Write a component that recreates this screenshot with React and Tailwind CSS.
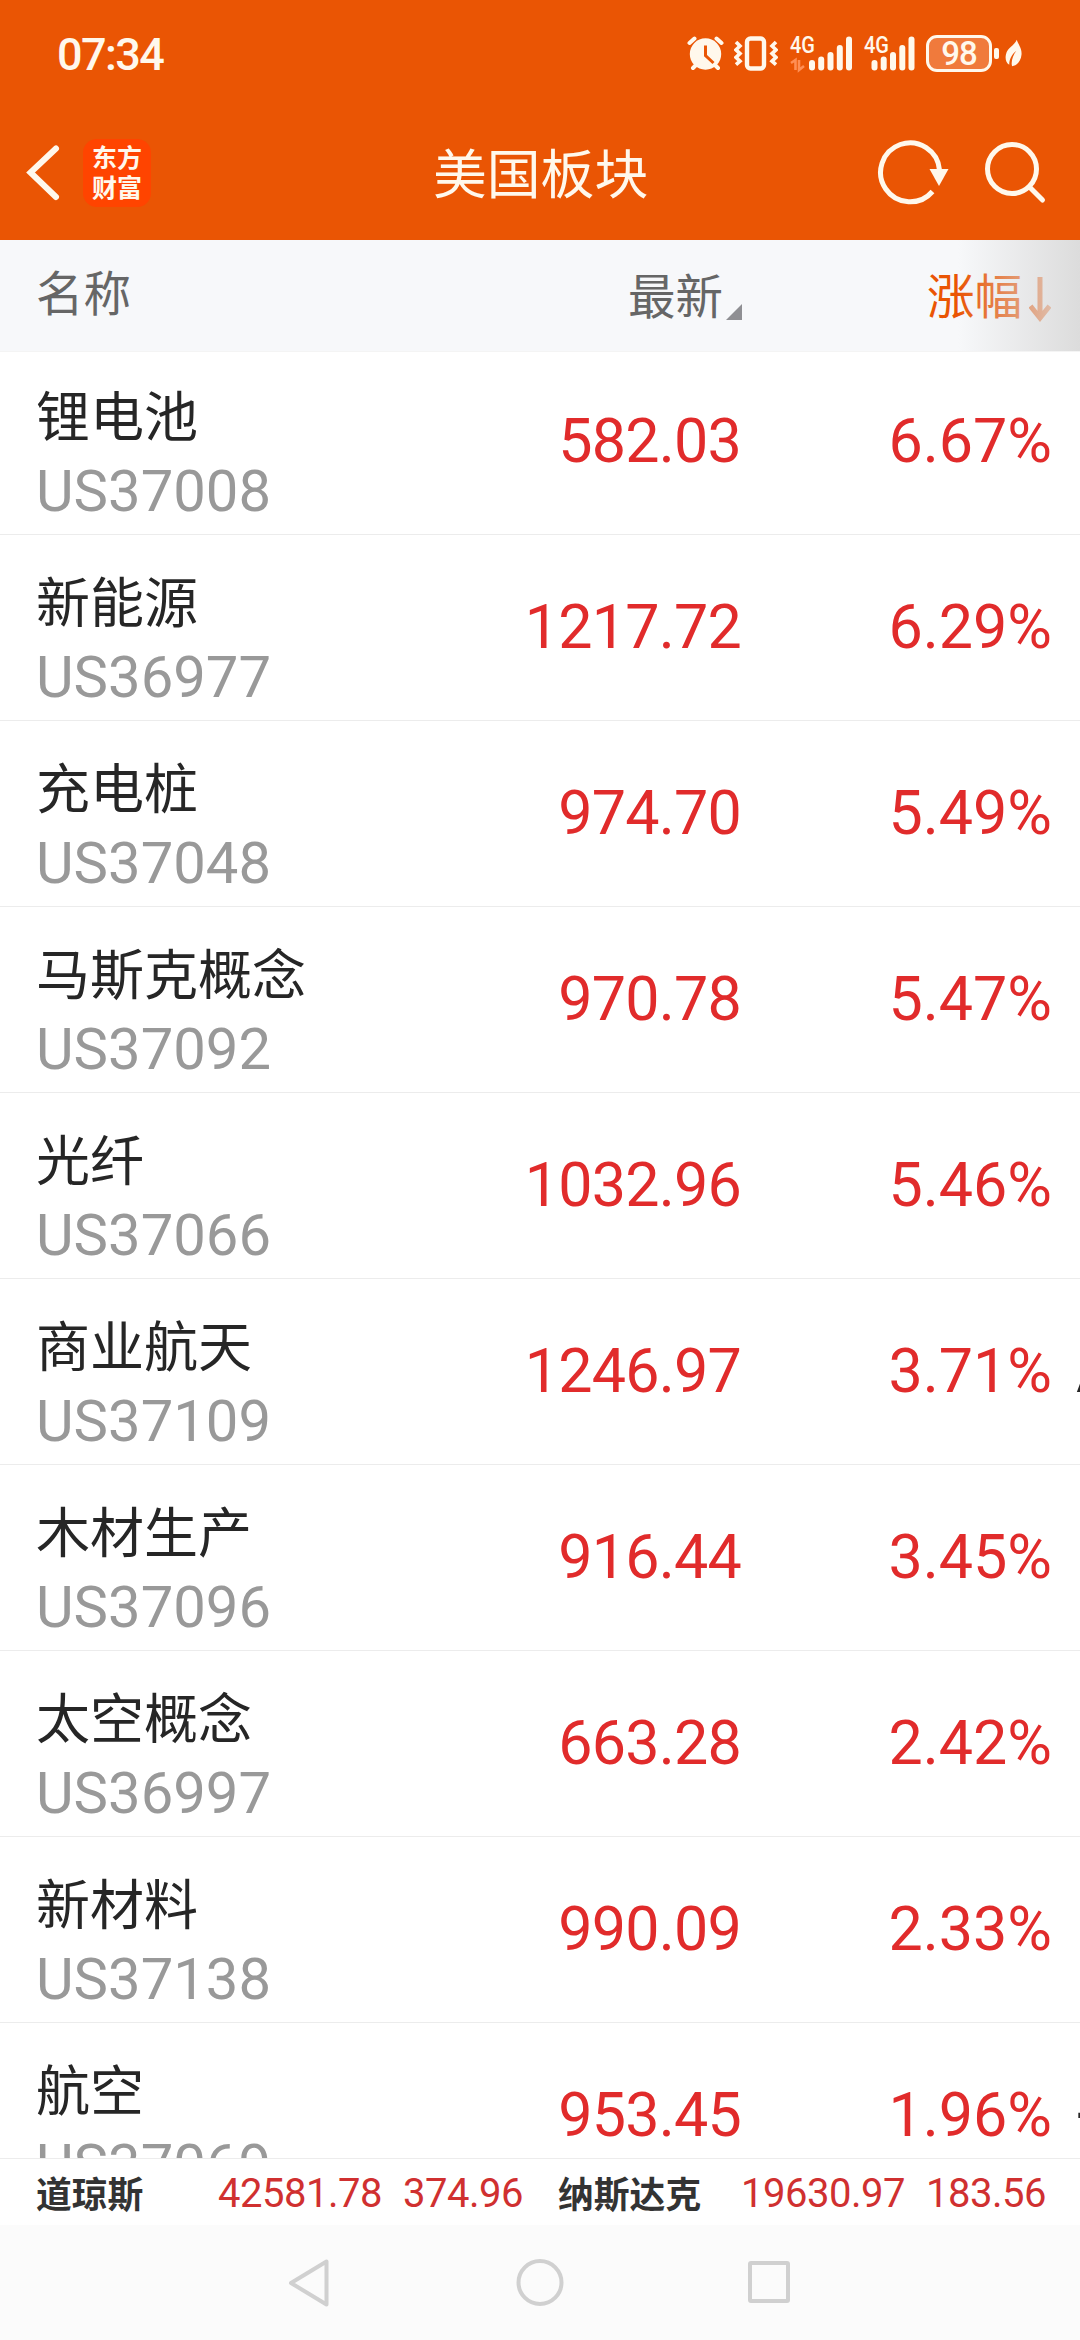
import React from 'react';

const SECTORS = [
    { name: '锂电池', code: 'US37008', price: '582.03', change: '6.67%' },
    { name: '新能源', code: 'US36977', price: '1217.72', change: '6.29%' },
    { name: '充电桩', code: 'US37048', price: '974.70', change: '5.49%' },
    { name: '马斯克概念', code: 'US37092', price: '970.78', change: '5.47%' },
    { name: '光纤', code: 'US37066', price: '1032.96', change: '5.46%' },
    { name: '商业航天', code: 'US37109', price: '1246.97', change: '3.71%', next: 'A' },
    { name: '木材生产', code: 'US37096', price: '916.44', change: '3.45%' },
    { name: '太空概念', code: 'US36997', price: '663.28', change: '2.42%' },
    { name: '新材料', code: 'US37138', price: '990.09', change: '2.33%' },
    { name: '航空', code: 'US37069', price: '953.45', change: '1.96%', next: '+' }
];

function Signal({ data }) {
    return (
        <svg className="overflow-visible" width={data ? 62 : 50} height="36" viewBox={data ? '0 0 62 36' : '0 0 50 36'} fill="#fff8ec">
            <text x="0" y="18" fontSize="23" fontWeight="500" textLength="25" lengthAdjust="spacingAndGlyphs">4G</text>
            {data && (
                <path d="M1 28l4.5-3v10M9 25v10l5-4" stroke="#ff8f55" strokeWidth="2.6" fill="none" />
            )}
            <g transform={data ? 'translate(19 0)' : 'translate(7.5 0)'}>
                <rect x="0" y="25" width="6" height="10.5" rx="3" />
                <rect x="9.2" y="21.5" width="6" height="14" rx="3" />
                <rect x="18.5" y="17" width="6" height="18.5" rx="3" />
                <rect x="27.8" y="10" width="6" height="25.5" rx="3" />
                <rect x="37" y="1.5" width="6" height="34" rx="3" />
            </g>
        </svg>
    );
}

function StatusBar() {
    return (
        <div className="flex h-[108px] items-start justify-between pl-[57px] pr-[58px] pt-[35px] font-[Roboto,sans-serif] text-[#fff8ec]">
            <div className="mt-px text-[45px] font-medium leading-[38px] tracking-[-1.6px]">07:34</div>
            <div className="flex items-start">
                {/* Alarm */}
                <svg width="38" height="36" viewBox="0 0 38 36">
                    <circle cx="18.5" cy="19" r="15.7" fill="#fff8ec" />
                    <path d="M2.5 8l5-4.5M34.5 8l-5-4.5M6 33l4-4M31 33l-4-4" stroke="#fff8ec" strokeWidth="4" strokeLinecap="round" />
                    <path d="M18.5 10.5v10l8 7.5" stroke="#ea5504" strokeWidth="3" fill="none" />
                </svg>
                {/* Vibrate */}
                <svg className="ml-[9px]" width="44" height="36" viewBox="0 0 44 36" fill="none" stroke="#fff8ec">
                    <rect x="13" y="3.5" width="17" height="30" rx="3.5" strokeWidth="4.4" />
                    <path d="M2 7l4 4-4 3.8 4 3.8-4 3.8 4 3.8-4 3.5" strokeWidth="3.6" />
                    <path d="M42 7l-4 4 4 3.8-4 3.8 4 3.8-4 3.8 4 3.5" strokeWidth="3.6" />
                </svg>
                <div className="ml-[12px]"><Signal data /></div>
                <div className="ml-[12px]"><Signal /></div>
                {/* Battery */}
                <div className="ml-[12px] flex h-[37px] w-[66px] items-center justify-center rounded-[11px] border-[3px] border-[#fff8ec] bg-[#f07a3c] text-[33px] font-medium leading-none tracking-[-1px]">
                    98
                </div>
                <div className="ml-[2px] mt-[13px] h-[11px] w-[5px] rounded-[2px] bg-[#fff8ec]" />
                <svg className="ml-[6px] mt-[4px]" width="17" height="29" viewBox="0 0 18 29" fill="#fff8ec">
                    <path d="M12.5 0C14 5 18 9 17.5 15.5C17 22 13 27 7.5 28C6 23 8.500 16 12 11.5C7 15.5 4.5 20.5 4.5 26.5C1 24 0 20 1 15.5C2.5 8.5 10 6 12.5 0Z" />
                </svg>
            </div>
        </div>
    );
}

function NavBar() {
    return (
        <div className="flex h-[132px] items-start pl-[26px] pr-[31px] pt-[26px]">
            <svg width="40" height="76" viewBox="0 0 40 76" fill="none" stroke="#fff8ec" strokeWidth="6" strokeLinecap="round">
                <path d="M30 14.5L4.5 38.5L30 63" />
            </svg>
            <div className="ml-[17px] mt-[5px] flex size-[68px] flex-col items-center justify-center rounded-[14px] bg-[#ff4400] pb-[5px] font-['Noto_Sans_CJK_SC',sans-serif] text-[25px] font-bold leading-[30px] text-[#fff8ec]">
                <span>东方</span>
                <span>财富</span>
            </div>
            <h1 className="ml-[282px] -mt-[1px] font-['Noto_Sans_CJK_SC',sans-serif] text-[53.8px] leading-[76px] text-[#fff8ec]">美国板块</h1>
            <div className="ml-auto flex">
                <svg width="76" height="76" viewBox="0 0 76 76" fill="none" stroke="#fff8ec" strokeWidth="5">
                    <path d="M63.5 36A29.5 29.5 0 1 0 56.5 57.5" />
                    <path d="M53.5 35h19l-9.5 17z" fill="#fff8ec" stroke="none" />
                </svg>
                <svg className="ml-[32px]" width="65" height="76" viewBox="0 0 65 76" fill="none" stroke="#fff8ec" strokeWidth="5" strokeLinecap="round">
                    <circle cx="28" cy="35" r="24.5" />
                    <path d="M46 53.5L58.5 66" />
                </svg>
            </div>
        </div>
    );
}

function TableHead() {
    return (
        <div className="relative z-10 grid h-[112px] grid-cols-[441px_301px_309px_29px] border-b border-[#f4f4f4] bg-[#f7f8fa] font-['Noto_Sans_CJK_SC',sans-serif] text-[47.5px] leading-[70px] text-[#666666]">
            <div className="pl-[36px] pt-[16px]">名称</div>
            <div className="flex justify-end pt-[19px]">
                最新
                <svg className="ml-[3px] mt-[45px]" width="16" height="16" viewBox="0 0 16 16" fill="#8f8f93">
                    <path d="M16 0v16H0z" />
                </svg>
            </div>
            <div className="flex justify-end pt-[19px] text-[#ea5504]">
                涨幅
                <svg className="ml-[7px] mt-[17px]" width="22" height="46" viewBox="0 0 22 46" fill="none" stroke="#ea5504" strokeWidth="5">
                    <path d="M11 1v41M1.5 30L11 42l9.5-12" />
                </svg>
            </div>
            {/* Scroll hint */}
            <div className="absolute inset-y-0 right-0 w-[122px] bg-linear-to-r from-[#dcdcdc]/0 to-[#dcdcdc]" />
        </div>
    );
}

function SectorRow({ sector }) {
    return (
        <div className="grid h-[186px] shrink-0 grid-cols-[441px_300px_311px_28px] border-b border-[#ececec] font-[Roboto,sans-serif]">
            <div className="pl-[36px] pt-[28px]">
                <div className="whitespace-nowrap font-['Noto_Sans_CJK_SC',sans-serif] text-[54px] leading-[74px] text-[#262626]">{sector.name}</div>
                <div className="mt-[3px] text-[58px] leading-[74px] text-[#999999]">{sector.code}</div>
            </div>
            <div className="pt-[51px] text-right text-[61px] leading-[82px] tracking-[-0.8px] text-[#e12b2b]">{sector.price}</div>
            <div className="pt-[51px] text-right text-[61px] leading-[82px] text-[#e12b2b]">{sector.change}</div>
            <div className="overflow-hidden pl-[24px] pt-[51px] text-[61px] leading-[82px] text-[#262626]">{sector.next}</div>
        </div>
    );
}

function IndexTicker() {
    return (
        <div className="flex h-[67px] items-center border-t border-[#ececec] bg-white font-[Roboto,sans-serif] text-[40px] leading-[60px] tracking-[-0.5px] text-[#d03030]">
            <span className="ml-[36px] w-[182px] font-['Noto_Sans_CJK_SC',sans-serif] text-[35.8px] font-bold tracking-normal text-[#333333]">道琼斯</span>
            <span className="w-[185px] pt-[3px]">42581.78</span>
            <span className="w-[155px] pt-[3px]">374.96</span>
            <span className="w-[183px] font-['Noto_Sans_CJK_SC',sans-serif] text-[35.8px] font-bold tracking-normal text-[#333333]">纳斯达克</span>
            <span className="w-[185px] pt-[3px]">19630.97</span>
            <span className="pt-[3px]">183.56</span>
        </div>
    );
}

function SystemNav() {
    return (
        <div className="flex h-[115px] items-start justify-center bg-[#fbfbfb] pt-[32px]">
            <svg width="504" height="52" viewBox="0 0 504 52" fill="none" stroke="#d0d0d0" strokeWidth="4" strokeLinejoin="round">
                <path d="M38.5 4.5V47.5L3 26z" />
                <circle cx="252" cy="25.5" r="21.5" />
                <rect x="462" y="6" width="38" height="38" rx="1" />
            </svg>
        </div>
    );
}

export default function App() {
    return (
        <div className="flex h-[2340px] w-[1080px] flex-col overflow-hidden bg-white">
            <div className="h-[240px] shrink-0 bg-[#ea5504]">
                <StatusBar />
                <NavBar />
            </div>
            <TableHead />
            <div className="-mt-[3px] flex flex-1 flex-col overflow-hidden">
                {SECTORS.map((sector) => (
                    <SectorRow key={sector.code} sector={sector} />
                ))}
            </div>
            <IndexTicker />
            <SystemNav />
        </div>
    );
}
